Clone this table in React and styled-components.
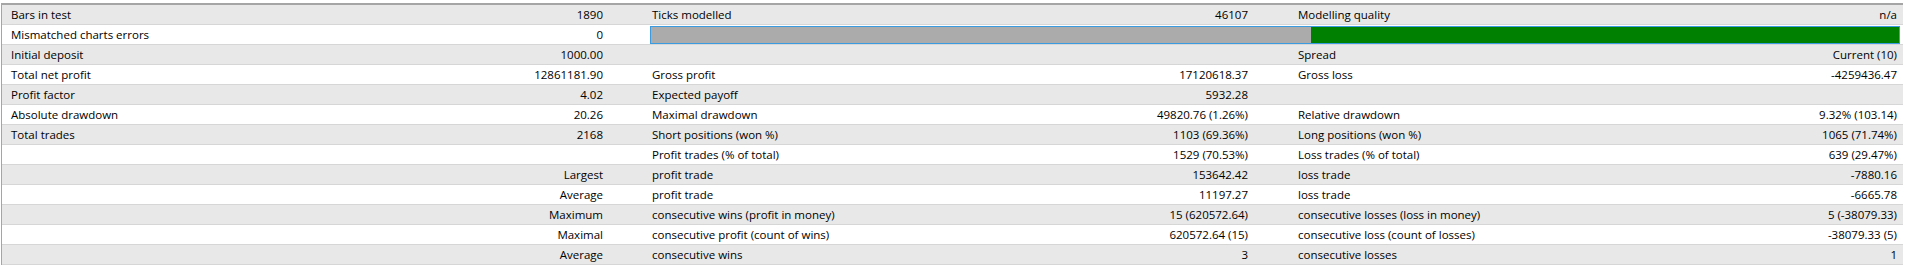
import React from "react";
import styled, { createGlobalStyle } from "styled-components";

const GlobalStyle = createGlobalStyle`
    html, body {
        margin: 0;
        padding: 0;
        background: #ffffff;
    }
    body {
        font-family: "Open Sans", "Noto Sans", sans-serif;
        font-size: 11.5px;
        color: #000000;
    }
`;

const Report = styled.div`
    width: 1901px;
    margin: 3px 0 0 1px;
    border-top: 2px solid #a5a5a5;
    border-left: 1px solid #a5a5a5;
`;

const Row = styled.div`
    display: grid;
    grid-template-columns: 643px 646px 611px;
    height: 19px;
    border-bottom: 1px solid #d6d6d6;
    background: ${(props) => props.shaded ? "#e8e8e8" : "#ffffff"};
`;

const Cell = styled.div`
    display: flex;
    align-items: center;
    justify-content: space-between;
    padding: ${(props) => props.first ? "0 42px 0 9px" : props.last ? "0 5px 0 7px" : "0 43px 0 7px"};
    white-space: nowrap;
    line-height: 19px;
`;

const Value = styled.span`
    margin-left: auto;
`;

const BarCell = styled.div`
    grid-column: 2 / span 2;
    display: flex;
    padding: 1px 2px 0 5px;
`;

const Bar = styled.div`
    display: flex;
    flex: 1;
    height: 16px;
    border: 1px solid #3b9be0;
    background: #008000;
`;

const BarFill = styled.div`
    height: 100%;
    background: #ababab;
`;

const rows = [
    [["Bars in test", "1890"], ["Ticks modelled", "46107"], ["Modelling quality", "n/a"]],
    "bar",
    [["Initial deposit", "1000.00"], ["", ""], ["Spread", "Current (10)"]],
    [["Total net profit", "12861181.90"], ["Gross profit", "17120618.37"], ["Gross loss", "-4259436.47"]],
    [["Profit factor", "4.02"], ["Expected payoff", "5932.28"], ["", ""]],
    [["Absolute drawdown", "20.26"], ["Maximal drawdown", "49820.76 (1.26%)"], ["Relative drawdown", "9.32% (103.14)"]],
    [["Total trades", "2168"], ["Short positions (won %)", "1103 (69.36%)"], ["Long positions (won %)", "1065 (71.74%)"]],
    [["", ""], ["Profit trades (% of total)", "1529 (70.53%)"], ["Loss trades (% of total)", "639 (29.47%)"]],
    [["", "Largest"], ["profit trade", "153642.42"], ["loss trade", "-7880.16"]],
    [["", "Average"], ["profit trade", "11197.27"], ["loss trade", "-6665.78"]],
    [["", "Maximum"], ["consecutive wins (profit in money)", "15 (620572.64)"], ["consecutive losses (loss in money)", "5 (-38079.33)"]],
    [["", "Maximal"], ["consecutive profit (count of wins)", "620572.64 (15)"], ["consecutive loss (count of losses)", "-38079.33 (5)"]],
    [["", "Average"], ["consecutive wins", "3"], ["consecutive losses", "1"]],
];

function App() {
    const quality = 52.9;

    return (
        <>
            <GlobalStyle />
            <Report>
                {rows.map((row, i) => {
                    if (row === "bar") {
                        return (
                            <Row key={i} shaded={i % 2 === 0}>
                                <Cell first>
                                    <span>Mismatched charts errors</span>
                                    <Value>0</Value>
                                </Cell>
                                <BarCell>
                                    <Bar>
                                        <BarFill style={{ width: `${quality}%` }} />
                                    </Bar>
                                </BarCell>
                            </Row>
                        );
                    }
                    return (
                        <Row key={i} shaded={i % 2 === 0}>
                            {row.map(([label, value], j) => (
                                <Cell key={j} first={j === 0} last={j === 2}>
                                    <span>{label}</span>
                                    <Value>{value}</Value>
                                </Cell>
                            ))}
                        </Row>
                    );
                })}
            </Report>
        </>
    );
}

export default App;
